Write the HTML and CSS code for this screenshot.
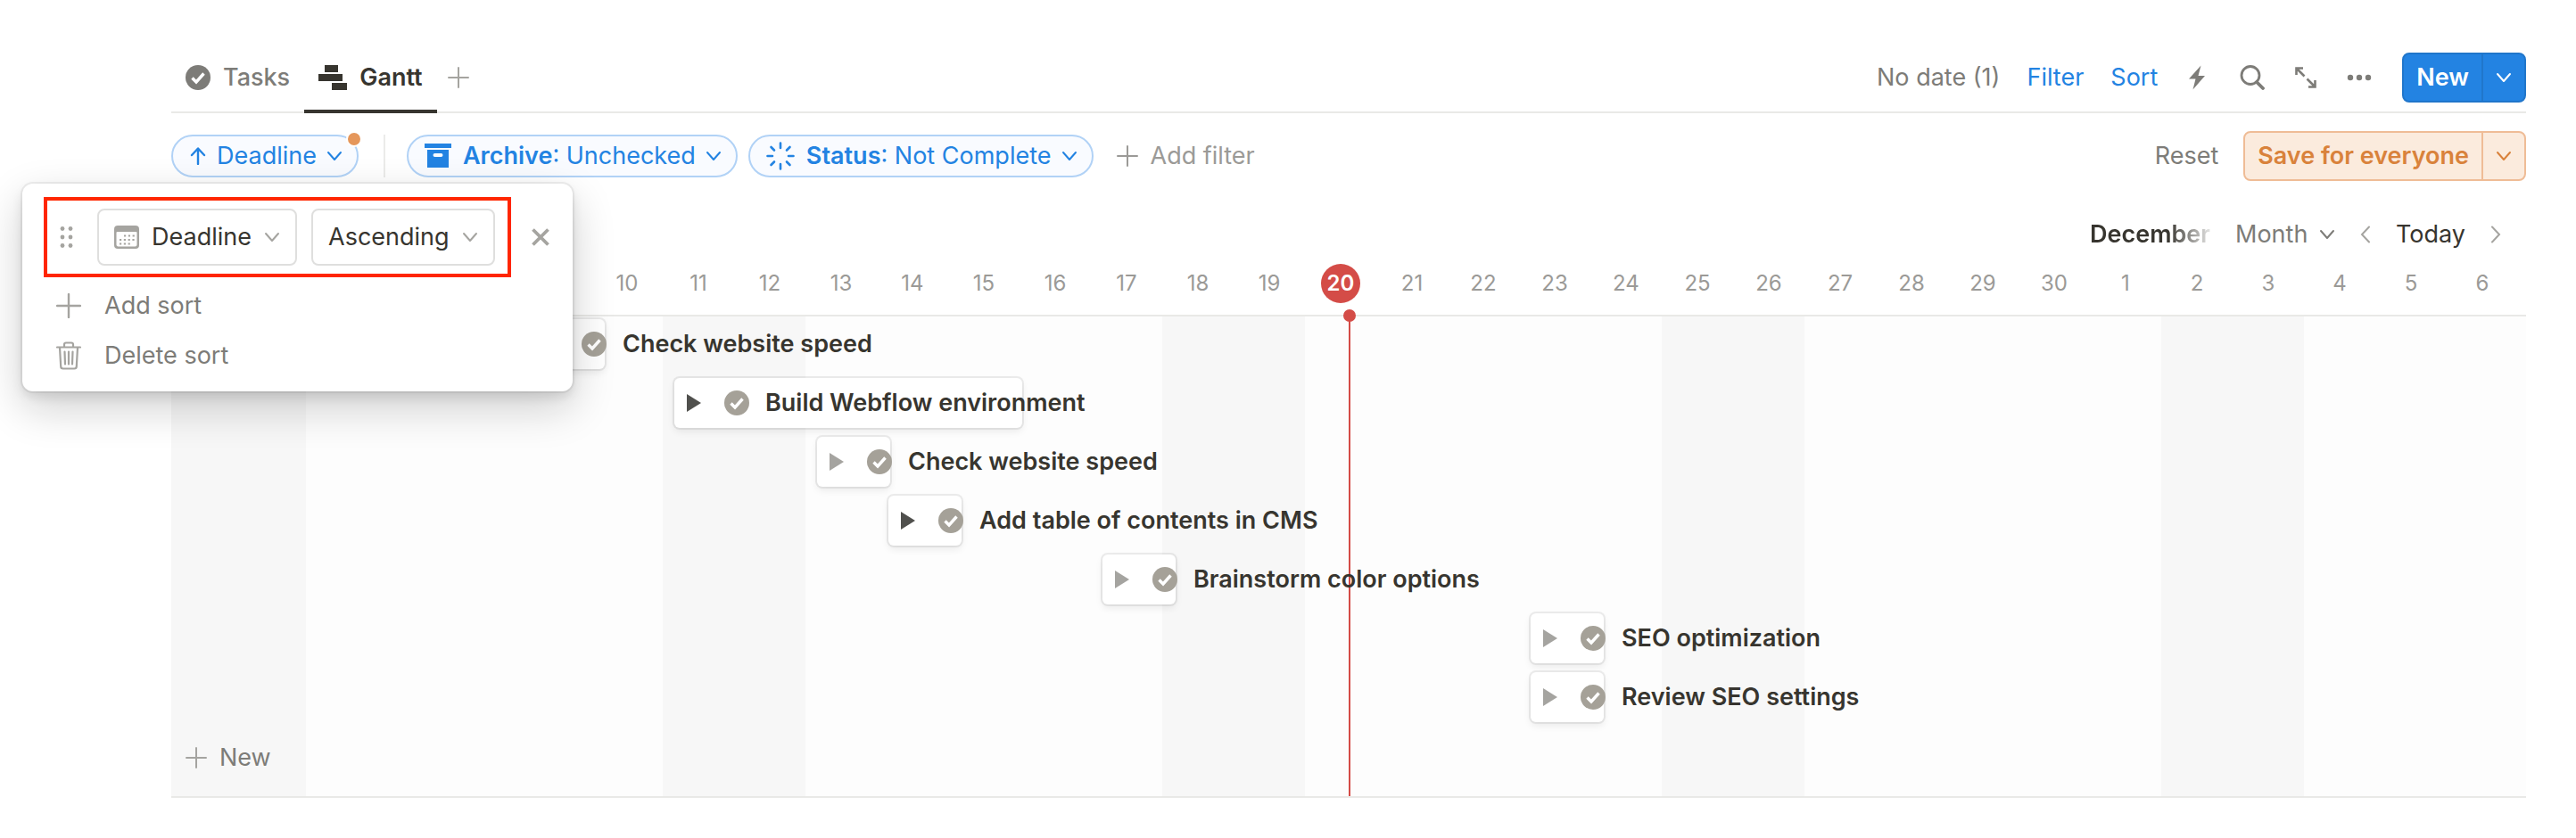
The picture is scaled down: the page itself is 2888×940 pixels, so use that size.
FILE: index.html
```html
<!DOCTYPE html>
<html lang="en">
<head>
<meta charset="UTF-8">
<meta name="viewport" content="width=device-width, initial-scale=1.0">
<title>Gantt</title>
<link rel="stylesheet" href="styles.css">
</head>
<body>
<!-- Shared icons -->
<svg class="sprite" aria-hidden="true">
    <symbol id="check" viewBox="0 0 28 28"><circle cx="14" cy="14" r="14" fill="currentColor"/><path d="M7.500 14.500l4.500 4.500 8.500-9.500" fill="none" stroke="#fff" stroke-width="3.400"/></symbol>
    <symbol id="plus" viewBox="0 0 24 24"><path d="M12 1v22M1 12h22" fill="none" stroke="currentColor" stroke-width="2" stroke-linecap="round"/></symbol>
    <symbol id="chevron" viewBox="0 0 18 18"><path d="M2 5l7 8 7-8" fill="none" stroke="currentColor" stroke-width="2" stroke-linecap="round" stroke-linejoin="round"/></symbol>
    <symbol id="triangle" viewBox="0 0 16 20"><path d="M0 0l16 10L0 20z" fill="currentColor"/></symbol>
</svg>

<main class="page">
    <header class="topbar">
        <nav class="tabs">
            <a class="tab" href="#tasks"><svg class="i28"><use href="#check"/></svg>Tasks</a>
            <a class="tab active" href="#gantt"><svg class="i32" viewBox="0 0 32 28"><path d="M7 0h15v8H7zM0 10h27v8H0zM15 20h17v8H15z" fill="currentColor"/></svg>Gantt</a>
            <button class="plain add-view" type="button" aria-label="Add view"><svg class="i24"><use href="#plus"/></svg></button>
        </nav>
        <div class="actions">
            <button class="plain" type="button">No date (1)</button>
            <button class="plain blue" type="button">Filter</button>
            <button class="plain blue" type="button">Sort</button>
            <div class="tools">
                <button class="plain" type="button" aria-label="Automations"><svg class="i28" viewBox="0 0 28 28"><path d="M18.500 0.500L5 15.500h7.500L9.500 27.500 23 12h-7.500z" fill="currentColor"/></svg></button>
                <button class="plain" type="button" aria-label="Search"><svg class="i28" viewBox="0 0 28 28"><circle cx="12" cy="11.500" r="10" fill="none" stroke="currentColor" stroke-width="2.800"/><path d="M19 19l7 7" stroke="currentColor" stroke-width="3.800" stroke-linecap="round"/></svg></button>
                <button class="plain" type="button" aria-label="Expand"><svg class="i24" viewBox="0 0 24 24"><path d="M1.500 9V1.500H9M2 2l8.500 8.500M22.500 15v7.500H15M22 22l-8.500-8.500" fill="none" stroke="currentColor" stroke-width="2.600"/></svg></button>
                <button class="plain" type="button" aria-label="More"><svg class="i28" viewBox="0 0 28 28"><circle cx="4" cy="14" r="3.200" fill="currentColor"/><circle cx="14" cy="14" r="3.200" fill="currentColor"/><circle cx="24" cy="14" r="3.200" fill="currentColor"/></svg></button>
                <div class="split primary">
                    <button type="button">New</button>
                    <button class="more" type="button" aria-label="New options"><svg class="i18"><use href="#chevron"/></svg></button>
                </div>
            </div>
        </div>
    </header>

    <section class="filters">
        <div class="sort-anchor">
            <button class="pill" type="button"><svg class="i20" viewBox="0 0 18 20"><path d="M9 19V2M2 9l7-7.500L16 9" fill="none" stroke="currentColor" stroke-width="2.400" stroke-linecap="round" stroke-linejoin="round"/></svg>Deadline<svg class="i18"><use href="#chevron"/></svg></button>
            <span class="badge"></span>
            <div class="popover">
                <div class="sort-row">
                    <div class="highlight">
                        <svg class="i24 grip faint" viewBox="0 0 24 24"><g fill="currentColor"><circle cx="7" cy="2.500" r="2.400"/><circle cx="16" cy="2.500" r="2.400"/><circle cx="7" cy="12" r="2.400"/><circle cx="16" cy="12" r="2.400"/><circle cx="7" cy="21.500" r="2.400"/><circle cx="16" cy="21.500" r="2.400"/></g></svg>
                        <label class="select">
                            <svg class="i28 faint" viewBox="0 0 28 28"><path fill="currentColor" fill-rule="evenodd" d="M4 1h20a4 4 0 0 1 4 4v18a4 4 0 0 1-4 4H4a4 4 0 0 1-4-4V5a4 4 0 0 1 4-4zM2.500 9v13.500a2 2 0 0 0 2 2h19a2 2 0 0 0 2-2V9a1 1 0 0 0-1-1h-21a1 1 0 0 0-1 1z"/><path d="M11 12.500h12M6 17h17M6 21.500h12" stroke="currentColor" stroke-width="2" stroke-dasharray="2.200 2.600"/></svg>
                            <select aria-label="Sort by"><option>Deadline</option></select>
                            <svg class="i18 faint"><use href="#chevron"/></svg>
                        </label>
                        <label class="select">
                            <select aria-label="Direction"><option>Ascending</option></select>
                            <svg class="i18 faint"><use href="#chevron"/></svg>
                        </label>
                    </div>
                    <button class="plain faint" type="button" aria-label="Remove"><svg class="i20" viewBox="0 0 20 20"><path d="M1.500 1.500l17 17M18.500 1.500l-17 17" stroke="currentColor" stroke-width="3.800"/></svg></button>
                </div>
                <button class="plain menu-item" type="button"><svg class="i28 faint" viewBox="0 0 28 28"><path d="M14 1v26M1 14h26" fill="none" stroke="currentColor" stroke-width="2.400" stroke-linecap="round"/></svg>Add sort</button>
                <button class="plain menu-item" type="button"><svg class="trash faint" viewBox="0 0 28 32"><path d="M1 6.500h26M9 6V3.500A2 2 0 0 1 11 1.500h6a2 2 0 0 1 2 2V6M4 7l1.200 21a2.500 2.500 0 0 0 2.500 2.500h12.600a2.500 2.500 0 0 0 2.500-2.500L24 7M9.500 11.500l.5 14M14 11.500v14M18.500 11.500l-.5 14" fill="none" stroke="currentColor" stroke-width="2.200" stroke-linecap="round"/></svg>Delete sort</button>
            </div>
        </div>
        <span class="divider"></span>
        <button class="pill" type="button"><svg class="i32" viewBox="0 -2 32 32"><path fill="currentColor" fill-rule="evenodd" d="M0 0h30v5H0zM3 7h24v20H3zm8.500 4a2 2 0 0 0 0 4h7a2 2 0 0 0 0-4z"/></svg><span><b>Archive</b>: Unchecked</span><svg class="i18"><use href="#chevron"/></svg></button>
        <button class="pill" type="button"><svg class="i34" viewBox="0 0 34 34"><path d="M16 2.500v5.500M16 26v5.500M1.500 17H7M25 17h5.500M5.500 7l3.500 3.500M26.500 7L23 10.500M5.500 27L9 23.500M26.500 27L23 23.500" stroke="currentColor" stroke-width="2.600" stroke-linecap="round"/></svg><span><b>Status</b>: Not Complete</span><svg class="i18"><use href="#chevron"/></svg></button>
        <button class="plain add-filter" type="button"><svg class="i24"><use href="#plus"/></svg>Add filter</button>
        <div class="save">
            <button class="plain" type="button">Reset</button>
            <div class="split orange">
                <button type="button">Save for everyone</button>
                <button class="more" type="button" aria-label="Save options"><svg class="i18"><use href="#chevron"/></svg></button>
            </div>
        </div>
    </section>

    <section class="timeline">
        <div class="range">
            <span class="month-name">December</span>
            <label class="scale"><select aria-label="Scale"><option>Month</option></select><svg class="i18"><use href="#chevron"/></svg></label>
            <button class="plain faint" type="button" aria-label="Previous"><svg class="side" viewBox="0 0 12 20"><path d="M10 1.500L2 10l8 8.500" fill="none" stroke="currentColor" stroke-width="2" stroke-linecap="round"/></svg></button>
            <button class="plain dark" type="button">Today</button>
            <button class="plain faint" type="button" aria-label="Next"><svg class="side" viewBox="0 0 12 20"><path d="M2 1.500l8 8.500-8 8.500" fill="none" stroke="currentColor" stroke-width="2" stroke-linecap="round"/></svg></button>
        </div>
        <ol class="days">
            <li></li><li></li><li></li><li></li><li></li><li></li><li>10</li><li>11</li><li>12</li><li>13</li><li>14</li>
            <li>15</li><li>16</li><li>17</li><li>18</li><li>19</li><li><span class="today">20</span></li><li>21</li><li>22</li><li>23</li><li>24</li><li>25</li>
            <li>26</li><li>27</li><li>28</li><li>29</li><li>30</li><li>1</li><li>2</li><li>3</li><li>4</li><li>5</li><li>6</li>
        </ol>
        <!-- --start counts days from the first column -->
        <div class="chart">
            <span class="now"></span>
            <div class="row" style="--start: 5"><div class="bar"><svg class="tri"><use href="#triangle"/></svg><svg class="i28"><use href="#check"/></svg><span>Check website speed</span></div></div>
            <div class="row" style="--start: 7"><div class="bar" style="--days: 5"><svg class="tri open"><use href="#triangle"/></svg><svg class="i28"><use href="#check"/></svg><span>Build Webflow environment</span></div></div>
            <div class="row" style="--start: 9"><div class="bar"><svg class="tri"><use href="#triangle"/></svg><svg class="i28"><use href="#check"/></svg><span>Check website speed</span></div></div>
            <div class="row" style="--start: 10"><div class="bar"><svg class="tri open"><use href="#triangle"/></svg><svg class="i28"><use href="#check"/></svg><span>Add table of contents in CMS</span></div></div>
            <div class="row" style="--start: 13"><div class="bar"><svg class="tri"><use href="#triangle"/></svg><svg class="i28"><use href="#check"/></svg><span>Brainstorm color options</span></div></div>
            <div class="row" style="--start: 19"><div class="bar"><svg class="tri"><use href="#triangle"/></svg><svg class="i28"><use href="#check"/></svg><span>SEO optimization</span></div></div>
            <div class="row" style="--start: 19"><div class="bar"><svg class="tri"><use href="#triangle"/></svg><svg class="i28"><use href="#check"/></svg><span>Review SEO settings</span></div></div>
            <button class="plain new-row" type="button"><svg class="i24 faint"><use href="#plus"/></svg>New</button>
        </div>
    </section>
</main>
</body>
</html>
```
FILE: styles.css
```css
* {
    box-sizing: border-box;
}
body {
    margin: 0;
    background: #fff;
    color: #37352f;
    font-family: Inter, "Liberation Sans", sans-serif;
    font-size: 27px;
    line-height: 36px;
}
button, select {
    font: inherit;
    color: inherit;
    background: none;
    border: none;
    padding: 0;
    margin: 0;
    cursor: pointer;
}
select {
    appearance: none;
}
svg {
    display: block;
    flex: none;
}
.sprite {
    position: absolute;
    width: 0;
    height: 0;
}

/* icon sizes */
.i18 { width: 18px; height: 18px; }
.i20 { width: 20px; height: 20px; }
.i24 { width: 24px; height: 24px; }
.i28 { width: 28px; height: 28px; }
.i32 { width: 32px; height: 32px; }
.i34 { width: 34px; height: 34px; }
.trash { width: 28px; height: 32px; }
.side { width: 12px; height: 20px; }

.page {
    padding: 49px 56px 0 192px;
}
.plain {
    display: flex;
    align-items: center;
    color: #7d7c78;
    white-space: nowrap;
}
.plain.blue { color: #2383e2; }
.plain.dark { color: #37352f; }
.plain.faint, .faint { color: #a5a4a0; }

/* top bar */
.topbar {
    display: flex;
    justify-content: space-between;
    height: 78px;
    border-bottom: 2px solid #e9e9e7;
}
.tabs {
    display: flex;
}
.tab {
    display: flex;
    align-items: center;
    gap: 14px;
    height: 78px;
    padding: 2px 16px 0;
    border-bottom: 4px solid transparent;
    color: #7d7c78;
    font-weight: 500;
    text-decoration: none;
}
.tab.active {
    color: #37352f;
    border-color: #37352f;
    font-weight: 600;
}
.add-view {
    padding: 0 12px;
    color: #a5a4a0;
}
.actions {
    display: flex;
    align-items: center;
    gap: 30px;
}
.tools {
    display: flex;
    align-items: center;
    gap: 34px;
}

/* button with a drop-down part */
.split {
    display: flex;
    height: 56px;
    border: 2px solid;
    border-radius: 8px;
    font-weight: 600;
    white-space: nowrap;
}
.split button {
    padding: 0 14px;
}
.split .more {
    width: 48px;
    border-left: 2px solid;
    border-color: inherit;
}
.primary {
    background: #2383e2;
    border-color: #2076cb;
    color: #fff;
}
.orange {
    background: #fbebdd;
    border-color: #efbc96;
    color: #d9823b;
}

/* filters */
.filters {
    display: flex;
    align-items: center;
    margin-top: 20px;
    height: 56px;
}
.sort-anchor {
    position: relative;
}
.pill {
    display: flex;
    align-items: center;
    gap: 11px;
    height: 48px;
    padding: 0 16px 0 18px;
    margin-right: 12px;
    border: 2px solid #b1d2f6;
    border-radius: 24px;
    background: #f9fbff;
    color: #2383e2;
    white-space: nowrap;
}
.pill b {
    font-weight: 600;
}
.sort-anchor .pill {
    margin-right: 0;
}
.badge {
    position: absolute;
    top: -4px;
    right: -4px;
    width: 18px;
    height: 18px;
    border: 2px solid #fff;
    border-radius: 50%;
    background: #e5975b;
}
.divider {
    width: 2px;
    height: 48px;
    margin: 0 24px 0 28px;
    background: #ebebea;
}
.add-filter {
    gap: 14px;
    margin-left: 14px;
    color: #9b9a97;
}
.save {
    display: flex;
    gap: 28px;
    margin-left: auto;
}

/* sort popover */
.popover {
    position: absolute;
    z-index: 2;
    top: 55px;
    left: -167px;
    width: 617px;
    padding: 15px 24px 12px;
    border-radius: 12px;
    background: #fff;
    box-shadow: 0 0 0 2px rgba(15,15,15,0.06), 0 6px 12px rgba(15,15,15,0.1), 0 18px 48px rgba(15,15,15,0.2);
}
.sort-row {
    display: flex;
    align-items: center;
    gap: 23px;
    margin-bottom: 4px;
}
.highlight {
    display: flex;
    align-items: center;
    gap: 16px;
    padding: 9px 14px 9px 10px;
    border: 4px solid #ff2600;
}
.grip {
    margin-right: 6px;
}
.select {
    display: flex;
    align-items: center;
    gap: 14px;
    height: 64px;
    padding: 0 17px;
    border: 2px solid #dfdfde;
    border-radius: 8px;
}
.menu-item {
    gap: 26px;
    width: 100%;
    height: 56px;
    padding-left: 14px;
}

/* timeline */
.timeline {
    overflow: hidden;
}
.range {
    display: flex;
    align-items: center;
    justify-content: flex-end;
    gap: 28px;
    height: 40px;
    margin-top: 40px;
    padding-right: 28px;
    white-space: nowrap;
}
.month-name {
    font-weight: 600;
    -webkit-mask-image: linear-gradient(to right, #000 65%, transparent 105%);
    mask-image: linear-gradient(to right, #000 65%, transparent 105%);
}
.scale {
    display: flex;
    align-items: center;
    gap: 12px;
    color: #7d7c78;
}
.days {
    display: flex;
    align-items: center;
    height: 72px;
    margin: 0 0 0 -9px;
    padding: 0;
    border-bottom: 2px solid #e9e9e7;
    list-style: none;
    color: #9b9a97;
    font-size: 24px;
}
.days li {
    flex: none;
    width: 80px;
    text-align: center;
}
.today {
    display: inline-block;
    width: 44px;
    border-radius: 50%;
    background: #d44c47;
    color: #fff;
    font-weight: 600;
    line-height: 44px;
}
.chart {
    position: relative;
    padding-bottom: 10px;
    border-bottom: 2px solid #e9e9e7;
    background: linear-gradient(to right, #f7f7f7 160px, #fdfdfd 160px) -9px 0 / 560px 100%;
}
.now {
    position: absolute;
    top: 0;
    bottom: 0;
    left: 1320px;
    width: 2px;
    background: #d44c47;
}
/* the dot sits on the header line, so the timeline must not clip it */
.now::before {
    content: "";
    position: absolute;
    top: -8px;
    left: -6px;
    width: 14px;
    height: 14px;
    border-radius: 50%;
    background: #d44c47;
}
.row {
    height: 66px;
    padding-top: 3px;
    padding-left: calc(var(--start) * 80px + 4px);
}
.bar {
    position: relative;
    display: flex;
    align-items: center;
    width: calc(var(--days, 1) * 80px - 10px);
    min-width: 82px;
    height: 56px;
    padding-left: 14px;
    border-radius: 6px;
    background: #fff;
    box-shadow: 0 0 0 2px rgba(15,15,15,0.07), 0 4px 8px rgba(15,15,15,0.08);
    color: #a5a198;
    white-space: nowrap;
}
.bar span {
    margin-left: 18px;
    color: #37352f;
    font-weight: 600;
}
.tri {
    width: 16px;
    height: 20px;
    margin-right: 26px;
    color: #a5a4a0;
}
.tri.open {
    color: #50504d;
}
.new-row {
    gap: 14px;
    height: 66px;
    padding-left: 16px;
}
```
